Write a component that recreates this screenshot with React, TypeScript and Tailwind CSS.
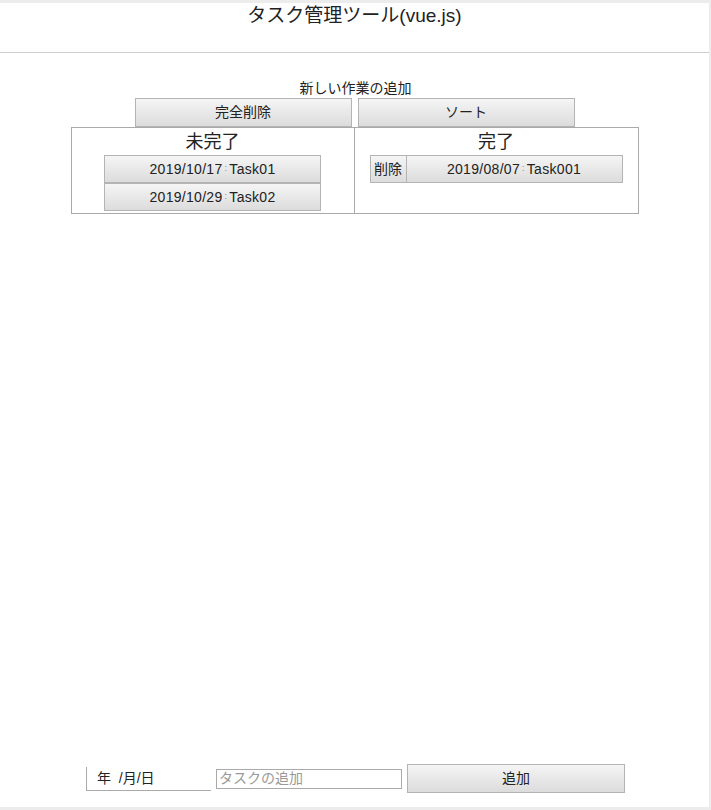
const font = "font-['Liberation_Sans','Noto_Sans_CJK_JP',sans-serif]";

const btn =
  "border border-[#b4b4b4] bg-gradient-to-b from-[#f5f5f5] to-[#dcdcdc] text-[14px] text-[#222] flex items-center justify-center";

function TaskButton({ label }: { label: string }) {
  return (
    <div className={`${btn} w-[217px] h-[28px] tracking-[0.3px]`}>
      {label.split(":")[0]}
      <span className="text-[9px] text-[#888] mx-[2px]">:</span>
      {label.split(":")[1]}
    </div>
  );
}

export default function App() {
  return (
    <div className={`${font} w-[711px] h-[810px] bg-[#ececec] pt-[3px] pr-[2px] pb-[3px]`}>
      <div className="bg-white h-full flex flex-col">
        <header className="h-[50px] border-b border-[#cfcfcf] flex justify-center pt-[1px]">
          <h1 className="text-[19px] text-[#222] leading-[24px]">タスク管理ツール(vue.js)</h1>
        </header>

        <main className="flex-1 flex flex-col items-center">
          <p className="text-[14px] text-[#222] mt-[26px] leading-[18px] pl-[2px]">新しい作業の追加</p>
          <div className="flex gap-[6px] mt-[1px]">
            <div className={`${btn} w-[217px] h-[29px]`}>完全削除</div>
            <div className={`${btn} w-[217px] h-[29px]`}>ソート</div>
          </div>

          <div className="flex w-[568px] h-[87px] border border-[#aaa]">
            <section className="w-1/2 border-r border-[#aaa] flex flex-col items-center">
              <h2 className="text-[18px] text-[#222] leading-[26px] mt-[1px]">未完了</h2>
              <TaskButton label="2019/10/17:Task01" />
              <TaskButton label="2019/10/29:Task02" />
            </section>
            <section className="w-1/2 flex flex-col items-center">
              <h2 className="text-[18px] text-[#222] leading-[26px] mt-[1px]">完了</h2>
              <div className="flex">
                <div className={`${btn} w-[36px] h-[28px] border-r-0`}>削除</div>
                <TaskButton label="2019/08/07:Task001" />
              </div>
            </section>
          </div>
        </main>

        <form className="flex items-center justify-center gap-[5px] pb-[14px] pl-[2px]">
          <div className="w-[125px] h-[24px] border-l border-b border-[#aaa] text-[14px] text-[#222] flex items-center pl-[10px]">
            年&nbsp;&nbsp;/月/日
          </div>
          <input
            placeholder="タスクの追加"
            className="w-[186px] h-[20px] border border-[#aaa] text-[14px] px-[2px] placeholder:text-[#999] outline-none"
          />
          <button type="button" className={`${btn} w-[218px] h-[29px]`}>追加</button>
        </form>
      </div>
    </div>
  );
}
